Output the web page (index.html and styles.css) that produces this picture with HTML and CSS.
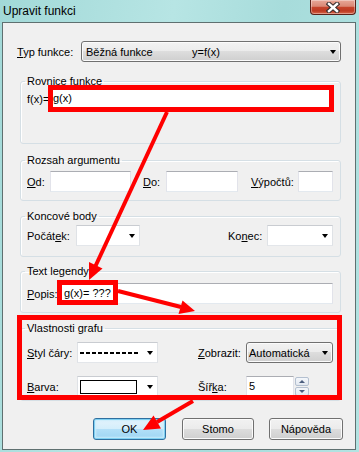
FILE: index.html
```html
<!DOCTYPE html>
<html>
<head>
<meta charset="utf-8">
<title>Upravit funkci</title>
<link rel="stylesheet" href="styles.css">
</head>
<body>
<div class="window">
  <div class="titlebar">
    <span class="title">Upravit funkci</span>
    <div class="close">
      <svg width="14" height="11" viewBox="0 0 14 11">
        <path d="M3 2 L11 9 M11 2 L3 9" stroke="#3b3030" stroke-width="4.6" stroke-linecap="square"/>
        <path d="M3 2 L11 9 M11 2 L3 9" stroke="#ffffff" stroke-width="2.4" stroke-linecap="square"/>
      </svg>
    </div>
  </div>
  <div class="client">
    <div class="typrow">
      <span class="lbl lbl-typ"><u>T</u>yp funkce:</span>
      <div class="btncombo combo-typ"><span class="c1">Běžná funkce</span><span>y=f(x)</span><i class="arrow"></i></div>
    </div>

    <fieldset class="grp g1">
      <legend>Rovnice funkce</legend>
      <div class="row">
        <span class="lbl w-fx">f(x)=</span>
        <div class="edit e-fx">g(x)</div>
      </div>
    </fieldset>

    <fieldset class="grp g2">
      <legend>Rozsah argumentu</legend>
      <div class="row">
        <span class="lbl w-od"><u>O</u>d:</span>
        <div class="edit e-od"></div>
        <span class="lbl w-do"><u>D</u>o:</span>
        <div class="edit e-do"></div>
        <span class="lbl w-vyp"><u>V</u>ýpočtů:</span>
        <div class="edit e-vyp"></div>
      </div>
    </fieldset>

    <fieldset class="grp g3">
      <legend>Koncové body</legend>
      <div class="row">
        <span class="lbl w-poc">Počát<u>e</u>k:</span>
        <div class="wcombo c-poc"><i class="arrow"></i></div>
        <span class="lbl w-kon">Ko<u>n</u>ec:</span>
        <div class="wcombo c-kon"><i class="arrow"></i></div>
      </div>
    </fieldset>

    <fieldset class="grp g4">
      <legend>Text legendy</legend>
      <div class="row">
        <span class="lbl w-pop"><u>P</u>opis:</span>
        <div class="edit e-pop">g(x)= ???</div>
      </div>
    </fieldset>

    <fieldset class="grp g5">
      <legend>Vlastnosti grafu</legend>
      <div class="props">
        <span class="lbl"><u>S</u>tyl čáry:</span>
        <div class="wcombo"><span class="dashes"></span><i class="arrow"></i></div>
        <span></span>
        <span class="lbl"><u>Z</u>obrazit:</span>
        <div class="btncombo c-zob"><span>Automatická</span><i class="arrow"></i></div>

        <span class="lbl"><u>B</u>arva:</span>
        <div class="wcombo"><span class="swatch"></span><i class="arrow"></i></div>
        <span></span>
        <span class="lbl">Šíř<u>k</u>a:</span>
        <div class="spinbox">
          <div class="edit e-sir">5</div>
          <div class="spin">
            <div class="spinbtn"><i class="up"></i></div>
            <div class="spinbtn"><i class="down"></i></div>
          </div>
        </div>
      </div>
    </fieldset>

    <div class="buttons">
      <div class="btn default">OK</div>
      <div class="btn b-storno">Stomo</div>
      <div class="btn b-help">Nápověda</div>
    </div>
  </div>

  <svg class="annot" width="359" height="452" viewBox="0 0 359 452">
    <g fill="none" stroke="#ff0000">
      <rect x="50.5" y="87.5" width="281" height="22" stroke-width="5"/>
      <rect x="59.5" y="282.5" width="56" height="20" stroke-width="5"/>
      <rect x="19.5" y="317.5" width="320" height="80" stroke-width="5"/>
      <line x1="167" y1="112" x2="95.5" y2="266" stroke-width="4"/>
      <line x1="118" y1="291" x2="181" y2="307" stroke-width="4"/>
      <line x1="193" y1="401" x2="157" y2="422" stroke-width="4"/>
    </g>
    <g fill="#ff0000">
      <polygon points="89,280 102.5,268.5 89,262"/>
      <polygon points="195,311 178.5,314 182.5,300.5"/>
      <polygon points="143,430 161,428.5 153.5,415.5"/>
    </g>
  </svg>
</div>
</body>
</html>
```

FILE: styles.css
```css
* { box-sizing: border-box; }
html, body { margin: 0; padding: 0; }
body {
  width: 359px;
  height: 452px;
  overflow: hidden;
  font-family: "Liberation Sans", Arial, sans-serif;
  font-size: 11px;
  color: #000;
  background: #fff;
}

.window {
  position: relative;
  width: 359px;
  height: 452px;
  padding: 0 3px 2px 2px;
  background: linear-gradient(100deg, #a2d9d8 0%, #b7e5e4 40%, #a7dcdb 65%, #b3e3e2 100%);
  display: flex;
  flex-direction: column;
}

.titlebar {
  height: 22px;
  flex: none;
  display: flex;
  align-items: flex-start;
}
.title {
  font-size: 12px;
  line-height: 22px;
  padding-left: 1px;
  color: #000;
}
.close {
  margin-left: auto;
  width: 46px;
  height: 15px;
  border: 1px solid #5a2119;
  border-top: none;
  border-radius: 0 0 4px 4px;
  background: linear-gradient(#e8a898 0%, #da8875 45%, #c6442b 52%, #bd3a22 78%, #d86a4c 100%);
  box-shadow: inset 0 0 0 1px rgba(255, 255, 255, 0.35);
  display: flex;
  align-items: center;
  justify-content: center;
}
.close svg { display: block; }

.client {
  flex: 1;
  background: #f0f0f0;
  border: 1px solid #5f7070;
  padding-top: 18px;
}

.lbl { white-space: nowrap; flex: none; }

.typrow {
  margin-left: 14px;
  display: flex;
  align-items: center;
  height: 21px;
}
.lbl-typ { width: 64px; }

.btncombo {
  height: 21px;
  border: 1px solid #707070;
  border-radius: 3px;
  background: linear-gradient(#f2f2f2 0%, #ebebeb 50%, #dddddd 50%, #cfcfcf 100%);
  box-shadow: inset 0 0 0 1px #fbfbfb;
  display: flex;
  align-items: center;
  white-space: nowrap;
}
.combo-typ { width: 260px; padding-left: 4px; }
.combo-typ .c1 { display: inline-block; width: 106px; }
.c-zob { width: 87px; padding-left: 2px; }

.arrow {
  flex: none;
  margin-left: auto;
  margin-right: 4px;
  width: 0;
  height: 0;
  border-left: 3.5px solid transparent;
  border-right: 3.5px solid transparent;
  border-top: 4px solid #000;
}

.grp {
  margin: 0 0 0 17px;
  width: 321px;
  min-width: 0;
  border: 1px solid #d5dfe5;
  border-radius: 3px;
  padding: 0 7px 0 6px;
  box-shadow: inset 1px 1px 0 #fff;
}
.grp legend {
  padding: 0 2px;
  margin-left: -2px;
  line-height: 14px;
  font-size: 11px;
}
.g1 { margin-top: 12px; padding-top: 0; padding-bottom: 34px; }
.g2 { margin-top: 9px; padding-top: 4px; padding-bottom: 8px; }
.g3 { margin-top: 8px; padding-top: 2px; padding-bottom: 10px; }
.g4 { margin-top: 7px; padding-top: 5px; padding-bottom: 8px; }
.g5 { margin-top: 8px; padding-top: 7px; padding-bottom: 3px; }

.row {
  display: flex;
  align-items: center;
  height: 21px;
}

.edit {
  flex: none;
  height: 21px;
  background: #fff;
  border: 1px solid;
  border-color: #abadb3 #e2e3ea #e3e9ef #e2e3ea;
  padding: 0 3px;
  line-height: 19px;
  white-space: nowrap;
}
.wcombo {
  flex: none;
  height: 21px;
  background: #fff;
  border: 1px solid;
  border-color: #c9ccd1 #dfe2e6 #e3e6ea #dfe2e6;
  display: flex;
  align-items: center;
}

.w-fx { width: 23px; }
.e-fx { width: 283px; padding-left: 2px; }

.w-od { width: 23px; }
.e-od { width: 81px; }
.w-do { width: 23px; margin-left: 12px; }
.e-do { width: 72px; }
.w-vyp { width: 47px; margin-left: 13px; }
.e-vyp { width: 35px; }

.w-poc { width: 49px; }
.c-poc { width: 64px; }
.w-kon { width: 39px; margin-left: auto; }
.c-kon { width: 66px; }

.w-pop { width: 33px; }
.e-pop { width: 273px; }

.props {
  display: grid;
  grid-template-columns: 50px 81px 40px 48px 87px;
  grid-template-rows: 21px 21px;
  row-gap: 13px;
  align-items: center;
}
.props .wcombo .arrow { margin-right: 4px; }
.dashes {
  margin-left: 2px;
  width: 59px;
  height: 2px;
  background: repeating-linear-gradient(to right, #000 0 4px, transparent 4px 6px);
}
.swatch {
  margin-left: 2px;
  width: 57px;
  height: 14px;
  border: 1px solid #000;
  background: #fff;
}

.spinbox { display: flex; align-items: center; }
.e-sir { width: 48px; padding-left: 2px; }
.spin {
  margin-left: 1px;
  width: 14px;
  height: 19px;
  display: flex;
  flex-direction: column;
  gap: 1px;
}
.spinbtn {
  flex: 1;
  border: 1px solid #b4c0d0;
  border-radius: 2px;
  background: linear-gradient(#f4f7fb, #e2e8f0);
  display: flex;
  align-items: center;
  justify-content: center;
}
.spinbtn .up, .spinbtn .down {
  width: 0;
  height: 0;
  border-left: 3px solid transparent;
  border-right: 3px solid transparent;
}
.spinbtn .up { border-bottom: 3px solid #4a5d7e; }
.spinbtn .down { border-top: 3px solid #4a5d7e; }

.buttons {
  margin-top: 17px;
  display: flex;
  padding-left: 90px;
}
.btn {
  height: 22px;
  border: 1px solid #707070;
  border-radius: 3px;
  background: linear-gradient(#f2f2f2 0%, #ebebeb 50%, #dddddd 50%, #cfcfcf 100%);
  box-shadow: inset 0 0 0 1px #fbfbfb;
  display: flex;
  align-items: center;
  justify-content: center;
  white-space: nowrap;
}
.btn.default {
  width: 73px;
  border-color: #2f6f9f;
  background: linear-gradient(#e5f4fc 0%, #d3eefb 50%, #b3e0f8 50%, #9dd5f3 100%);
  box-shadow: inset 0 0 0 1px #7fd0f2, inset 0 0 2px 2px #c9ecfb;
}
.b-storno { width: 72px; margin-left: 16px; }
.b-help { width: 74px; margin-left: 15px; }

.annot {
  position: absolute;
  left: 0;
  top: 0;
  pointer-events: none;
}
```
